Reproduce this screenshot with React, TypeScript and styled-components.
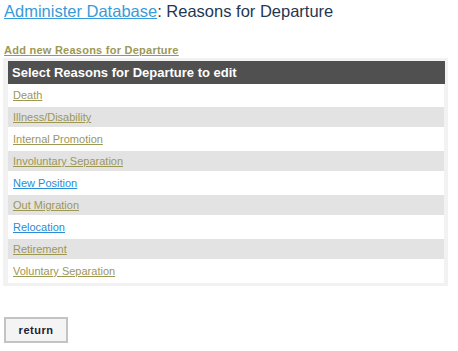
import React from "react";
import styled, { createGlobalStyle } from "styled-components";

const GlobalStyle = createGlobalStyle`
  html, body { margin: 0; padding: 0; background: #ffffff; }
  body { font-family: "Liberation Sans", Arial, sans-serif; }
`;

const Page = styled.div`
  width: 458px;
  padding: 0 10px 0 3px;
  box-sizing: border-box;
`;

const Title = styled.h1`
  margin: 0 0 0 1px;
  padding-top: 1px;
  font-size: 16.5px;
  line-height: 20px;
  font-weight: normal;
  color: #1f3753;
`;

const TitleLink = styled.a`
  color: #3a9ad8;
  text-decoration: underline;
`;

const AddLink = styled.a`
  display: block;
  margin: 23px 0 1px 1px;
  font-size: 11px;
  line-height: 13px;
  font-weight: bold;
  letter-spacing: 0.25px;
  color: #9d9755;
  text-decoration: underline;
`;

const Panel = styled.div`
  background: #f2f2f2;
  padding: 3px 3px 3px 5px;
`;

const Header = styled.div`
  height: 23px;
  line-height: 23px;
  background: #505050;
  color: #ffffff;
  font-size: 13px;
  font-weight: bold;
  padding-left: 4px;
`;

const Body = styled.div`
  background: #ffffff;
  display: flex;
  flex-direction: column;
  gap: 2px;
  padding: 1px 0 2px;
  margin-right: 1px;
`;

const Row = styled.div<{ $alt: boolean }>`
  height: 20px;
  line-height: 20px;
  padding-left: 5px;
  background: ${(p) => (p.$alt ? "#e3e3e3" : "#ffffff")};
  font-size: 11px;
`;

const RowLink = styled.a<{ $blue: boolean }>`
  color: ${(p) => (p.$blue ? "#2a8cd6" : "#9d9755")};
  text-decoration: underline;
`;

const ReturnButton = styled.button`
  display: block;
  margin: 31px 0 0 1px;
  width: 64px;
  height: 26px;
  border: 2px solid #c3c3c3;
  background: #f4f4f4;
  font-family: "Liberation Sans", Arial, sans-serif;
  font-size: 11px;
  font-weight: bold;
  letter-spacing: 0.5px;
  color: #1c2033;
  padding: 0;
  cursor: pointer;
`;

const items: { label: string; blue: boolean }[] = [
  { label: "Death", blue: false },
  { label: "Illness/Disability", blue: false },
  { label: "Internal Promotion", blue: false },
  { label: "Involuntary Separation", blue: false },
  { label: "New Position", blue: true },
  { label: "Out Migration", blue: false },
  { label: "Relocation", blue: true },
  { label: "Retirement", blue: false },
  { label: "Voluntary Separation", blue: false },
];

export default function App() {
  return (
    <Page>
      <GlobalStyle />
      <Title>
        <TitleLink href="#">Administer Database</TitleLink>: Reasons for Departure
      </Title>
      <AddLink href="#">Add new Reasons for Departure</AddLink>
      <Panel>
        <Header>Select Reasons for Departure to edit</Header>
        <Body>
          {items.map((it, i) => (
            <Row key={it.label} $alt={i % 2 === 1}>
              <RowLink href="#" $blue={it.blue}>
                {it.label}
              </RowLink>
            </Row>
          ))}
        </Body>
      </Panel>
      <ReturnButton type="button">return</ReturnButton>
    </Page>
  );
}
